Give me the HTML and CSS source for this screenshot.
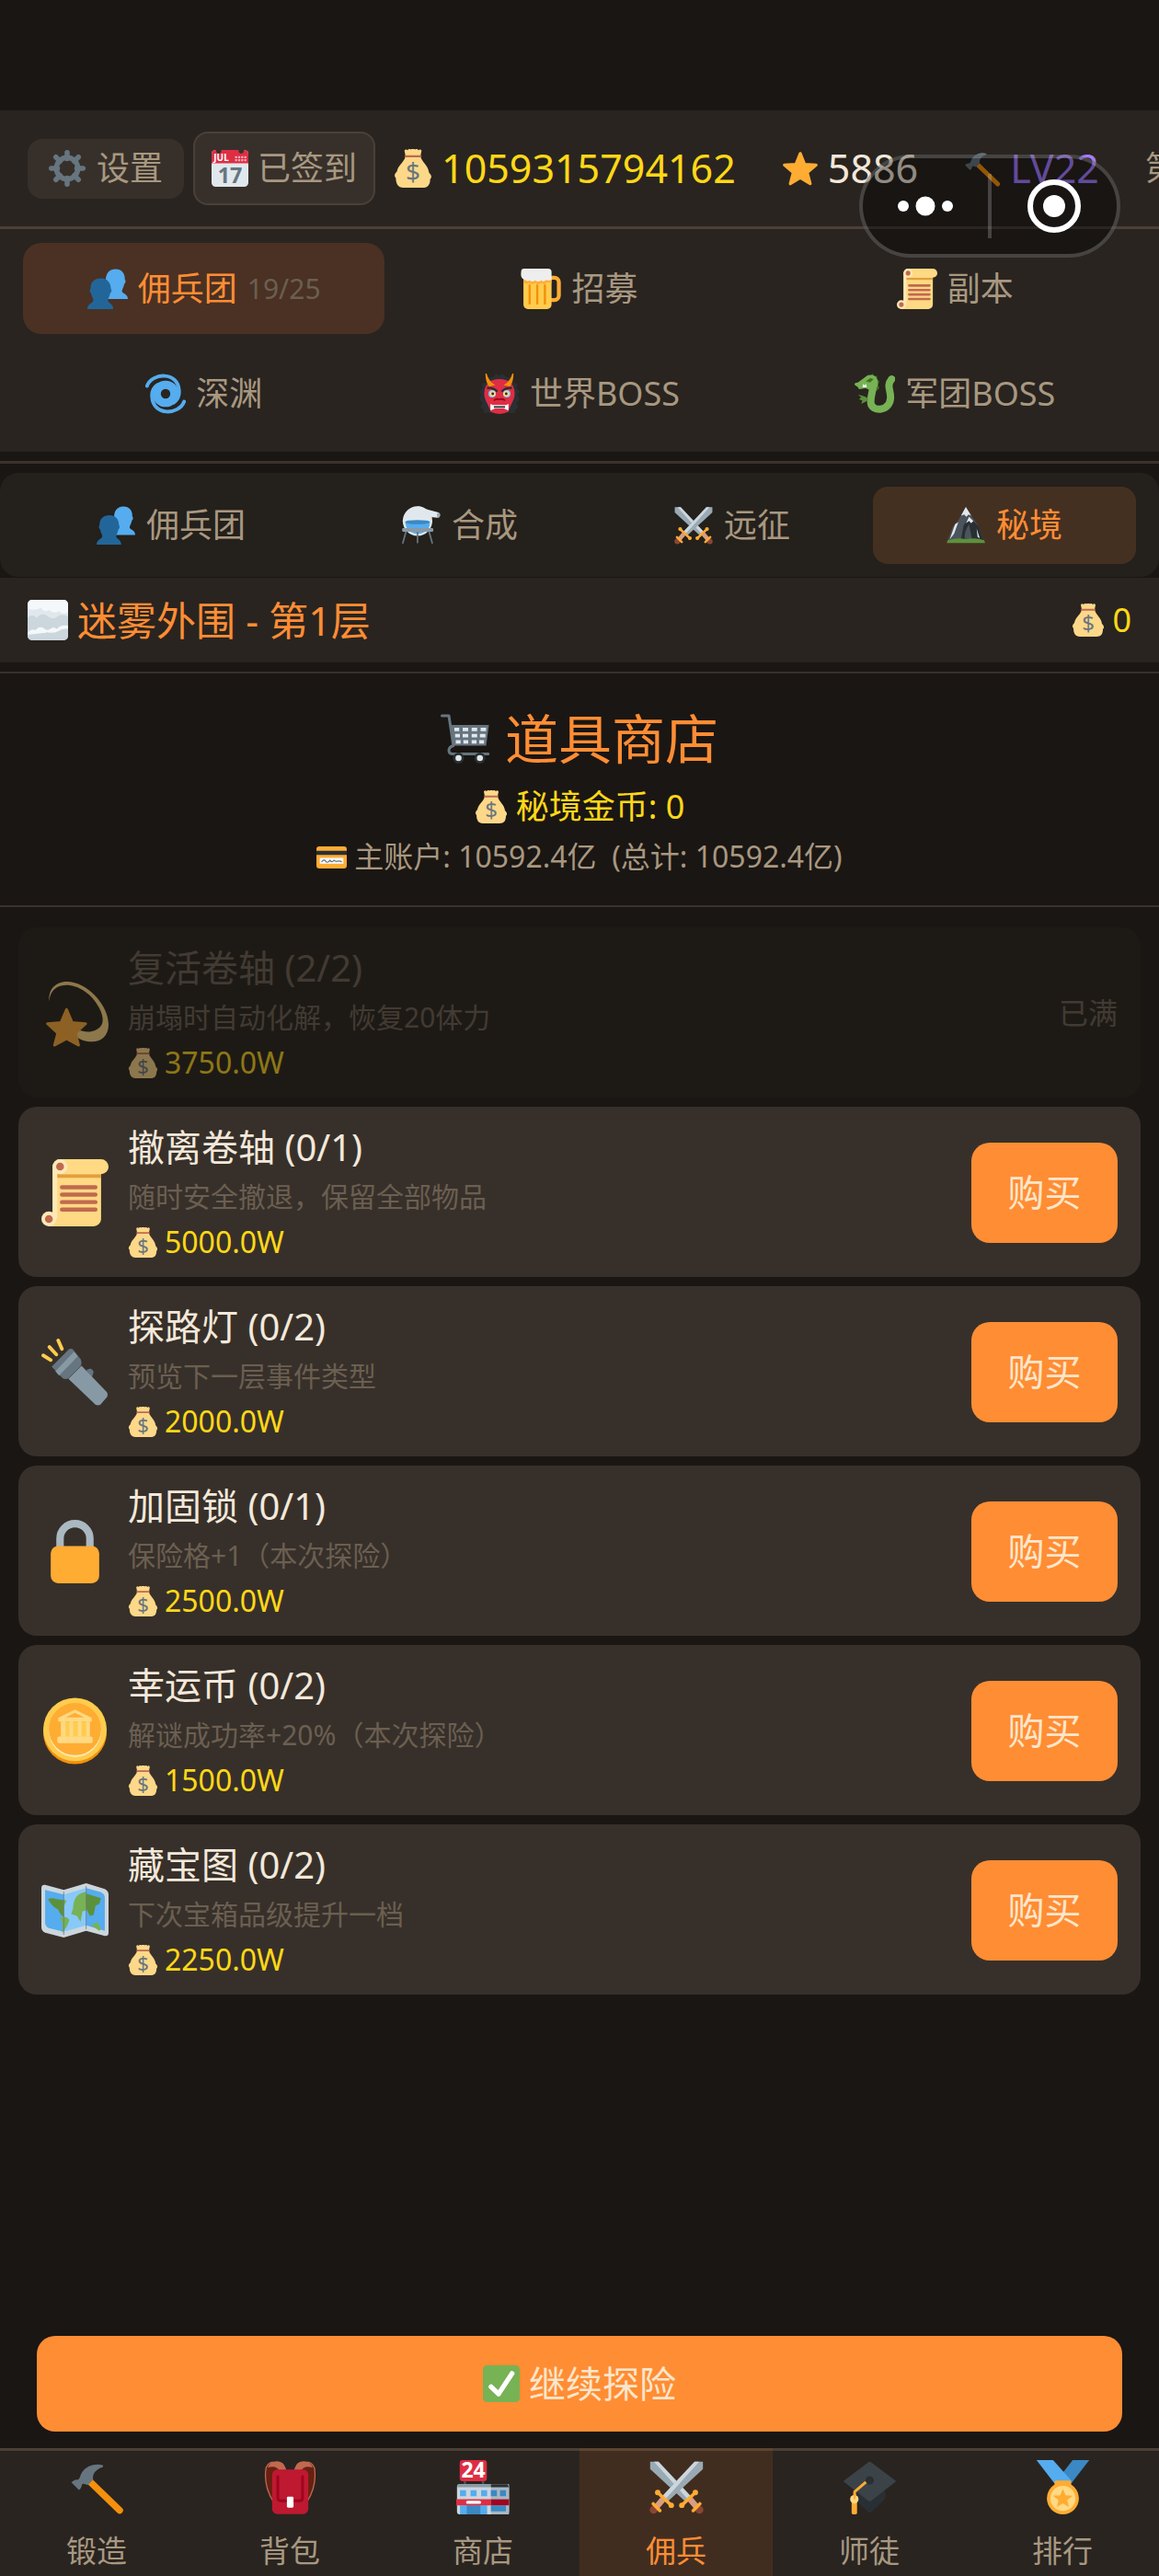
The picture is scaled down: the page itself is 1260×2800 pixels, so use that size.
FILE: index.html
```html
<!DOCTYPE html>
<html lang="zh-CN">
<head>
<meta charset="utf-8">
<meta name="viewport" content="width=device-width, initial-scale=1">
<title>道具商店</title>
<link rel="stylesheet" href="styles.css">
</head>
<body>
<svg class="sprite" aria-hidden="true">
  <symbol id="gear" viewBox="0 0 36 36">
    <g stroke="#66757F" stroke-width="5" stroke-linecap="round"><path d="M18 2.500v6M18 27.500v6M2.500 18h6M27.500 18h6M7 7l4 4M25 25l4 4M7 29l4-4M25 11l4-4"/></g>
    <circle cx="18" cy="18" r="10.500" fill="none" stroke="#66757F" stroke-width="5"/>
  </symbol>
  <symbol id="calendar" viewBox="0 0 36 36">
    <rect width="36" height="36" rx="4" fill="#E1E8ED"/>
    <path d="M0 13V4a4 4 0 0 1 4-4h28a4 4 0 0 1 4 4v9z" fill="#DD2E44"/>
    <circle cx="7" cy="1" r="2.500" fill="#37302a"/><circle cx="29" cy="1" r="2.500" fill="#37302a"/>
    <g fill="#F4ABBA"><path d="M23 6h2v2h-2zM26 6h2v2h-2zM29 6h2v2h-2zM32 6h2v2h-2zM23 9h2v2h-2zM26 9h2v2h-2zM29 9h2v2h-2zM32 9h2v2h-2z"/></g>
    <text x="9.500" y="11" class="cal-month" text-anchor="middle">JUL</text>
    <text x="18" y="32" class="cal-day" text-anchor="middle">17</text>
  </symbol>
  <symbol id="bag" viewBox="0 0 36 36">
    <path d="M11 7C9 13 4 15 3 21c-2 2-3 4-1 6 0 5 2 9 7 9h18c5 0 7-3 7-8 2-2 1-4-1-6-1-7-6-9-8-15z" fill="#FDD888"/>
    <path d="M11 6.500L10 1.500Q11-.5 13 1q1.500-2 3-.5 2-2 4 0 1.500-1.500 3 .5 2-1.500 3 .5l-1 5z" fill="#FDD888"/>
    <path d="M11 6.700h14" stroke="#BF6952" stroke-width="2" stroke-linecap="round"/>
    <text x="18" y="30" class="dollar" text-anchor="middle">$</text>
  </symbol>
  <symbol id="star" viewBox="0 0 36 36">
    <path d="M18 3.500l4.200 10.500 11.300.7-8.700 7.300 2.900 11L18 27l-9.700 6 2.900-11-8.700-7.300 11.300-.7z" fill="#FFAC33" stroke="#FFAC33" stroke-width="3" stroke-linejoin="round"/>
  </symbol>
  <symbol id="hammer" viewBox="0 0 36 36">
    <path d="M12.500 13.500L33 33.300" stroke="#F4900C" stroke-width="4.500" stroke-linecap="round"/>
    <path d="M22 3.500C17 1.800 11 4 8.500 7.500 6.500 10 7 12 5.500 13 4 13.200 3 12.800 1 14.800l5 5c2-1.300 1.500-2.800 2.200-3.800 1.300-1 2.800 1.200 4.100.2L15.500 13c-.7-2.500.3-6.500 6.500-8.400z" fill="#66757F"/>
  </symbol>
  <symbol id="busts" viewBox="0 0 36 36">
    <path d="M25 .5c5.500 0 8.500 4 8.300 9 1.200 1.500.7 3.500-.5 4.300-.4 3-1.800 4-2 6-.2 2.500 5.200 2.200 5.200 7.200H18V16l-1.500-3C15.500 5 19 .5 25 .5z" fill="#55ACEE"/>
    <path d="M12 8.500c5.500 0 9 4 8.800 9 1.200 1.500.7 3.500-.5 4.300-.4 3-1.800 4-2 6C18 31 23 30.500 23 36H0c0-5.500 5.500-5 5.300-8.200-.2-2-1.600-3-2-6-1.200-.8-1.700-2.800-.5-4.300-.2-5 3.200-9 9.200-9z" fill="#269"/>
  </symbol>
  <symbol id="beer" viewBox="0 0 36 36">
    <rect x="24" y="8" width="10" height="20" rx="4" fill="none" stroke="#FFAC33" stroke-width="3.500"/>
    <path d="M2.500 8h25v24a4 4 0 0 1-4 4h-17a4 4 0 0 1-4-4z" fill="#FFCC4D"/>
    <path d="M8 15v16M14.800 15v16M21.600 15v16" stroke="#F4900C" stroke-width="2" stroke-linecap="round"/>
    <path d="M2.500 10h25v3q-3-2-5 0-2 1.500-4-.5-3 3-5.500 0-3 2.500-5 0-3 2-5.500-.5z" fill="#FFAC33"/>
    <path d="M3 0h21.500a3 3 0 0 1 3 3v7q-3 1-5 0-2 2.500-4 .5-3 2-5.500 0-3 2-5 0-2 1.500-4-.5-4-1-3.700-5.500L.5 2.500Q.5 0 3 0z" fill="#EEE"/>
  </symbol>
  <symbol id="scroll" viewBox="0 0 36 36">
    <path d="M6 3h26v29a4 4 0 0 1-4 4H4v-7h2z" fill="#FFD983"/>
    <path d="M8 8h24v2H8z" fill="#E39F3D"/>
    <rect x="6" width="30" height="8" rx="4" fill="#FFD983"/>
    <path d="M6 4h2.500v28H6z" fill="#FFE8B6"/>
    <circle cx="10" cy="4" r="4" fill="#FFE8B6"/><circle cx="10" cy="4" r="2.100" fill="#C1694F"/>
    <circle cx="4" cy="32" r="4" fill="#FFE8B6"/><circle cx="4" cy="32" r="2.100" fill="#C1694F"/>
    <path d="M11 15h18M11 19h18M11 23h18M11 27h18" stroke="#C1694F" stroke-width="2.200" stroke-linecap="round"/>
  </symbol>
  <symbol id="cyclone" viewBox="0 0 36 36">
    <g fill="none" stroke="#55ACEE" stroke-linecap="round">
      <path d="M1.500 11C6-1 29-2 30 15c.5 5-2 9-5 11" stroke-width="3.200"/>
      <path d="M34.500 25C30 37 7 38 6 21c-.5-5 2-9 5-11" stroke-width="3.200"/>
      <circle cx="18" cy="18" r="8" stroke-width="7.500"/>
    </g>
  </symbol>
  <symbol id="ogre" viewBox="0 0 36 36">
    <path d="M12 3l3-3 3 2 3-2 3 3 5 1 1 4 4 1-1 4 3 3-2 3 2 4-3 3 2 4-3 2v3H4v-3l-3-2 2-4-3-3 2-4-2-3 3-3-1-4 4-1 1-4z" fill="#292F33"/>
    <path d="M18 5c8 0 13 4 13.500 12C32 24 27 28 26 34q-8 4-16 0C9 28 4 24 4.500 17 5 9 10 5 18 5z" fill="#DD2E44"/>
    <path d="M6 0q0 7 3 11l4-1Q8 7 6 0zM30 0q0 7-3 11l-4-1q5-3 7-10z" fill="#F4900C" stroke="#F4900C"/>
    <path d="M7 13q5-1 9 3M29 13q-5-1-9 3" stroke="#292F33" stroke-width="2" fill="none"/>
    <circle cx="11.500" cy="18" r="3.300" fill="#88C9F9"/><circle cx="24.500" cy="18" r="3.300" fill="#88C9F9"/>
    <circle cx="12" cy="18" r="2.500" fill="#FFD983"/><circle cx="24" cy="18" r="2.500" fill="#FFD983"/>
    <circle cx="12" cy="18" r="1.200" fill="#292F33"/><circle cx="24" cy="18" r="1.200" fill="#292F33"/>
    <path d="M13 24q2-2 5-1 3-1 5 1" fill="none" stroke="#A0041E" stroke-width="1.500"/>
    <path d="M10 27l2 1h12l2-1v6l-4-2h-8l-4 2z" fill="#FFF"/><path d="M13 29h10v1.500H13z" fill="#292F33"/>
  </symbol>
  <symbol id="dragon" viewBox="0 0 36 36">
    <path d="M11 4l1-3 2 1.500L16 0l1.500 2.500L20 2v3l2 2-1 3 1 3-3 3-8-8z" fill="#3E721D"/>
    <path d="M17 7c0 8-3 12-2.500 19 .5 8 16.500 8.500 17.500-4 .5-7-4-11 1-17" fill="none" stroke="#77B255" stroke-width="6.500" stroke-linecap="round"/>
    <path d="M0 10q0-2 3-2l8-6q5-2 8 1 3 4 1 9l-6 3-4-2-6 1-1-2z" fill="#77B255"/>
    <path d="M10 7l4-3 3 1-3 3z" fill="#3E721D"/><path d="M7 12l1-3 1 2 1-2 1 3z" fill="#FFF"/>
    <path d="M12 24l-6 3 1-3-3-1 2-2-3-2q4 0 9 3z" fill="#5C913B"/>
  </symbol>
  <symbol id="alembic" viewBox="0 0 36 36">
    <circle cx="14.500" cy="14" r="13.800" fill="#E1E8ED"/>
    <path d="M14 .2q4 0 8 2.500L34 6q2 1 1.500 3-.5 2-2.500 2L25 10z" fill="#E1E8ED"/><ellipse cx="34" cy="8.500" rx="1.500" ry="2.200" fill="#99AAB5"/>
    <path d="M3 15h23q0 10-11.500 11Q4 25 3 15z" fill="#55ACEE"/><ellipse cx="14.500" cy="15" rx="11.500" ry="2" fill="#3B88C3"/>
    <path d="M4 23L.8 34.500M25 23l3.200 11.500M14.500 24v10" stroke="#66757F" stroke-width="1.500" stroke-linecap="round"/>
    <rect x=".2" y="20.500" width="29" height="3.500" rx="1" fill="#8899A6"/>
  </symbol>
  <symbol id="swords" viewBox="0 0 36 36">
    <path d="M.5 1H6l22 23.500-3.500 3.500L.5 6z" fill="#99AAB5"/><path d="M3 1h3l21 22.500-2 2z" fill="#CCD6DD"/>
    <path d="M27 26l6 7" stroke="#D99E82" stroke-width="4"/><circle cx="33.200" cy="33" r="2.600" fill="#8A4633"/>
    <path d="M30.500 21.500l-9 8.500M29 33.500l4.500-4.500" stroke="#FFAC33" stroke-width="2.200" stroke-linecap="round"/>
    <circle cx="30.500" cy="21.500" r="1.800" fill="#FFAC33"/><circle cx="21.500" cy="30" r="1.800" fill="#FFAC33"/>
    <path d="M35.500 1H30L8 24.500l3.500 3.500 24-22z" fill="#99AAB5"/><path d="M33 1h-3L9 23.500l2 2z" fill="#CCD6DD"/>
    <path d="M9 26l-6 7" stroke="#D99E82" stroke-width="4"/><circle cx="2.800" cy="33" r="2.600" fill="#8A4633"/>
    <path d="M5.500 21.500l9 8.500M7 33.500L2.500 29" stroke="#FFAC33" stroke-width="2.200" stroke-linecap="round"/>
    <circle cx="5.500" cy="21.500" r="1.800" fill="#FFAC33"/><circle cx="14.500" cy="30" r="1.800" fill="#FFAC33"/>
  </symbol>
  <symbol id="mountain" viewBox="0 0 36 36">
    <path d="M.5 34L6 19l4-4L18 1l7 11 5 7 5.500 15z" fill="#4B545D"/>
    <path d="M13 33l3-15 5-8 9 9 5 14z" fill="#292F33"/><path d="M17 33q-1-9 4-16l3 16z" fill="#4B545D"/>
    <path d="M18 .8L13.500 9l3-1 2 2 2-2 2.500 1zM21 10l-3 6 3-2 2 2 2-2zM8 17l3-2-4 11-4 5zM28 21l3 9-2-1z" fill="#E1E8ED"/>
    <path d="M1 32q10-3 17-1 10-2 17 1l1 2.500H.3z" fill="#5C913B"/>
  </symbol>
  <symbol id="fog" viewBox="0 0 36 36">
    <rect width="36" height="36" rx="4" fill="#E1E8ED"/>
    <path d="M0 8V4a4 4 0 0 1 4-4h28a4 4 0 0 1 4 4v7q-5 3-8-1-5 3-9-1-4 3-7-2-5 3-12 1z" fill="#F5F8FA"/>
    <path d="M0 16q4-4 8 0 4-5 9-2 4 4 8 2 5-5 11-1v14q-5-2-9 1-8 4-14 0-7-2-13 1z" fill="#CCD6DD"/>
    <path d="M0 29q4-4 7-2 3-4 7-2 3 3 6 1 3-3 6 0 3-4 10-3v3q-6 0-9 3-5 2-9 0-9 2-18 3z" fill="#F5F8FA"/>
    <path d="M0 31q9-1 18-2 5 1 9-1 4-3 9-2v6a4 4 0 0 1-4 4H4a4 4 0 0 1-4-4z" fill="#CCD6DD"/>
  </symbol>
  <symbol id="cart" viewBox="0 0 36 36">
    <path d="M1 1.300h5L9.300 23Q6 24 6 26.500 6 29 9 29h25.500" fill="none" stroke="#66757F" stroke-width="2" stroke-linecap="round" stroke-linejoin="round"/>
    <path d="M7.500 8H35l-2 15H9z" fill="#66757F"/>
    <path d="M10 10h3.500v2.500H10zM16 10h4v2.500h-4zM22.500 10h4v2.500h-4zM29 10h4v2.500h-4zM10.500 14.500H14V17h-3.500zM16 14.500h4V17h-4zM22.500 14.500h4V17h-4zM28.500 14.500h4V17h-4zM11 19h3.500v2.500H11zM16.500 19H20v2.500h-3.500zM22.500 19H26v2.500h-3.500zM28 19h3.500v2.500H28z" fill="#E1E8ED"/>
    <circle cx="13" cy="32" r="4" fill="#292F33"/><circle cx="28.500" cy="32" r="4" fill="#292F33"/><circle cx="13" cy="32" r="2.200" fill="#E1E8ED"/><circle cx="28.500" cy="32" r="2.200" fill="#E1E8ED"/>
  </symbol>
  <symbol id="card" viewBox="0 0 36 36">
    <rect y="5.500" width="36" height="26" rx="3.500" fill="#FFAC33"/><path d="M0 10.500h36v5H0z" fill="#292F33"/>
    <path d="M4 19h28v7H4z" fill="#F5F8FA"/><path d="M6 24q3-4 5-1t5-1q2 3 5 0 2 2 4 1 3-1 5 1" fill="none" stroke="#66757F" stroke-width="1.300"/>
  </symbol>
  <symbol id="dizzy" viewBox="0 0 36 36">
    <path d="M4.200 11.500C3.500 4 9 1 13.500 1 25 1 36 14 36 24c0 6-4 9.200-9 9.200-3 0-6-.7-9-3.200v-4c4 2 8 2.500 11 1 4.500-2 5-6 2-12C27 7 19 2.500 13 2.800 8 3 4.500 6 4.200 11.500z" fill="#FFD983"/>
    <path d="M13.500 16l3 7 7.200.5-5.500 5 1.700 6.500-6.400-3.500L7.100 35l1.700-6.500-5.500-5 7.200-.5z" fill="#FFAC33" stroke="#FFAC33" stroke-width="1.500" stroke-linejoin="round"/>
  </symbol>
  <symbol id="flashlight" viewBox="0 0 36 36">
    <path d="M1 9l4 2.500M4.300 4.500L8 8.500M9 1l2 4.500" stroke="#FFCC4D" stroke-width="1.900" stroke-linecap="round"/>
    <path d="M24 17q3-2 4 1l-1 3z" fill="#66757F"/>
    <path d="M14.500 21.600l7-7 13.500 14q1 1.500 0 3l-3.200 3.600q-1.500 1-3 0z" fill="#8899A6"/>
    <path d="M5.500 15l9.300-9.300q1-.5 2 0L21 11q1 2 0 3.800l-6.500 6.500q-1.500.8-3 0z" fill="#66757F"/><path d="M7.500 17.500L17.500 7l2 2.500L9.500 19.800z" fill="#8899A6"/>
  </symbol>
  <symbol id="lock" viewBox="0 0 36 36">
    <path d="M10 18v-7a8 8 0 0 1 16 0v7" fill="none" stroke="#AAB8C2" stroke-width="4"/><rect x="5" y="15" width="26" height="20" rx="4" fill="#FFAC33"/>
  </symbol>
  <symbol id="coin" viewBox="0 0 36 36">
    <circle cx="18" cy="18.800" r="17" fill="#F4900C"/><circle cx="18" cy="17.200" r="17" fill="#FFCC4D"/><circle cx="18" cy="18" r="14" fill="#FFE8B6"/><circle cx="18" cy="17" r="14" fill="#FFAC33"/>
    <path d="M18 6.500l9 4.500v2H9v-2z" fill="#FFD983"/><path d="M10.500 13h15v9h-15z" fill="#FFCC4D"/><path d="M10.500 13H13v8h-2.500zM15 13h2v8h-2zM19.500 13h2v8h-2zM24 13h2v8h-2z" fill="#FFD983"/><rect x="8.500" y="21" width="19" height="3.500" rx="1" fill="#FFD983"/>
    <path d="M13 10.700l5-2.500 5 2.500z" fill="#FFAC33"/>
  </symbol>
  <symbol id="map" viewBox="0 0 36 36">
    <path d="M0 6q0-2 2-1.700L12 7l12-3.500 10 3q2 1 2 3V30q0 2-2 1.700L24 29 12 32.500 2 30q-2-1-2-3z" fill="#CCD6DD"/>
    <path d="M2 7l10 2.500v20L4 27.500q-2-1-2-3zM24 6l8 2.300q2 1 2 3V29l-10-3z" fill="#55ACEE"/><path d="M12 9.500L24 6v20l-12 3.500z" fill="#88C9F9"/>
    <path d="M3.500 12q2-1 4.500 0l4 .5v9q-2-1-3-4-3-1-5.500-5.500zM24 9l8 2.500-1 3-2 1-1 5-2 .5-2-4z" fill="#5C913B"/>
    <path d="M12 12l1.500 1-1.500 3zM10 22q3-1.500 5 1-1 4-4 7 1-4-1-8zM17 17q0-8 7-9v10l-2 .5-1 5.500-2-3-3-1zM27 26l3-2 2 4-1 1zM28 21l3 2" fill="#77B255"/>
    <path d="M12 8v23M24 5v23" stroke="#66757F" stroke-width=".4"/>
  </symbol>
  <symbol id="check" viewBox="0 0 36 36"><rect width="36" height="36" rx="4" fill="#77B255"/><path d="M8 21l7.300 7L28.500 8" fill="none" stroke="#FFF" stroke-width="4.800" stroke-linecap="round" stroke-linejoin="round"/></symbol>
  <symbol id="backpack" viewBox="0 0 36 36">
    <path d="M7 28Q0 17 2 5q3-6 9-2l3 5M29 28q7-11 5-23-3-6-9-2l-3 5" fill="#662113" stroke="#C1694F" stroke-width=".8"/>
    <path d="M3 5q2-5 8-4 4 1 4.500 7h-4Q9 3 3 5zM33 5q-2-5-8-4-4 1-4.500 7h4Q27 3 33 5z" fill="#C1694F"/>
    <rect x="6" y="6.300" width="24" height="29.500" rx="3.500" fill="#BE1931"/><path d="M9.800 11v14q0 2 2 2h12.400q2 0 2-2V11" fill="none" stroke="#A0041E" stroke-width="1.800" stroke-linecap="round"/>
    <rect x="15.800" y="24.200" width="4.400" height="7.300" rx=".8" fill="#FFF"/>
  </symbol>
  <symbol id="store" viewBox="0 0 36 36">
    <path d="M5 13h1.500v4H5zM17 13h1.500v4H17z" fill="#4B545D"/><rect x="2.300" y="0" width="18" height="14" rx="2" fill="#DD2E44"/><text x="11.300" y="11.800" class="store-sign" text-anchor="middle">24</text>
    <rect x=".5" y="16" width="34.500" height="20" rx="1.500" fill="#CCD6DD"/><path d="M23 16h12v20H23z" fill="#AAB8C2"/>
    <path d="M.5 18l1-2H23v2z" fill="#8899A6"/><path d="M23 16h11l1 2H23z" fill="#292F33"/>
    <path d="M2.500 20h4v4h-4zM9.500 20h4v4h-4zM16.500 20h4v4h-4zM2.500 30h18v6h-18z" fill="#55ACEE"/><path d="M23 20h4v4h-4zM29 20h4v4h-4zM23 30h10v4H23zM7 30h9v6H7z" fill="#3B88C3"/>
    <path d="M0 26h23v4H0z" fill="#DD2E44"/><path d="M23 26h12v4H23z" fill="#A0041E"/><rect x="6.500" y="27" width="10" height="2" rx="1" fill="#FFF"/>
  </symbol>
  <symbol id="cap" viewBox="0 0 36 36">
    <path d="M8 21l10-6 10 5q1.500 5-1 7l-8 7.500q-1 .7-2 0L9 27z" fill="#292F33"/><path d="M17 1.500q1-1 2 0L35 13.500q.7.500 0 1L19 27q-1 .7-2 0L1 14.500q-.7-.5 0-1z" fill="#3B4348"/>
    <circle cx="18" cy="13.500" r="2.800" fill="#292F33"/><path d="M15.500 14.500L8 21v5" fill="none" stroke="#FFAC33" stroke-width="1.800"/><rect x="6" y="26" width="3.600" height="10" rx="1" fill="#FFAC33"/><circle cx="7.800" cy="26" r="2.800" fill="#FFD983"/><path d="M8 22v4" stroke="#FFAC33" stroke-width="1.500"/>
  </symbol>
  <symbol id="medal" viewBox="0 0 36 36">
    <path d="M24.500 0h11L23.500 15.500l-6-6.500z" fill="#3B88C3"/><path d="M.5 0h11L24 14l-11.500 1.500z" fill="#55ACEE"/>
    <rect x="12.500" y="13.500" width="11" height="5" rx="1" fill="#FFAC33"/><circle cx="18" cy="25.400" r="10.600" fill="#FFAC33"/><circle cx="18" cy="25.400" r="8.300" fill="#FFD983"/>
    <path d="M18 19l1.800 4.300 4.700.3-3.600 3 1.100 4.500-4-2.400-4 2.400 1.100-4.500-3.600-3 4.700-.3z" fill="#FFAC33"/>
  </symbol>
</svg>

<div class="app">
  <header class="topbar">
    <button class="pill" type="button"><svg class="icon i40"><use href="#gear"/></svg>设置</button>
    <button class="pill pill-outlined" type="button"><svg class="icon i40"><use href="#calendar"/></svg>已签到</button>
    <div class="stats">
      <span class="stat gold"><svg class="icon i42"><use href="#bag"/></svg>1059315794162</span>
      <span class="stat"><svg class="icon i40"><use href="#star"/></svg>5886</span>
      <span class="stat level"><svg class="icon i40"><use href="#hammer"/></svg>LV22</span>
      <span class="stat rank">第</span>
    </div>
    <div class="capsule">
      <button class="capsule-btn" type="button" aria-label="更多"><svg class="dots" viewBox="0 0 60 24"><circle cx="6" cy="12" r="6"/><circle cx="30" cy="12" r="10.500"/><circle cx="54" cy="12" r="6"/></svg></button>
      <span class="capsule-line"></span>
      <button class="capsule-btn" type="button" aria-label="关闭"><svg class="target" viewBox="0 0 58 58"><circle cx="29" cy="29" r="26" fill="none" stroke="#fff" stroke-width="6"/><circle cx="29" cy="29" r="12"/></svg></button>
    </div>
  </header>

  <nav class="tabs">
    <button class="tab active" type="button"><svg class="icon i44"><use href="#busts"/></svg>佣兵团<small>19/25</small></button>
    <button class="tab" type="button"><svg class="icon i44"><use href="#beer"/></svg>招募</button>
    <button class="tab" type="button"><svg class="icon i44"><use href="#scroll"/></svg>副本</button>
    <button class="tab" type="button"><svg class="icon i44"><use href="#cyclone"/></svg>深渊</button>
    <button class="tab" type="button"><svg class="icon i44"><use href="#ogre"/></svg>世界BOSS</button>
    <button class="tab" type="button"><svg class="icon i44"><use href="#dragon"/></svg>军团BOSS</button>
  </nav>
  <hr class="rule">

  <nav class="subtabs">
    <button class="subtab" type="button"><svg class="icon i42"><use href="#busts"/></svg>佣兵团</button>
    <button class="subtab" type="button"><svg class="icon i42"><use href="#alembic"/></svg>合成</button>
    <button class="subtab" type="button"><svg class="icon i42"><use href="#swords"/></svg>远征</button>
    <button class="subtab active" type="button"><svg class="icon i42"><use href="#mountain"/></svg>秘境</button>
  </nav>

  <section class="floor">
    <h2 class="floor-name"><svg class="icon i44"><use href="#fog"/></svg>迷雾外围 - 第1层</h2>
    <span class="floor-coins"><svg class="icon i36"><use href="#bag"/></svg>0</span>
  </section>
  <hr class="rule thin">

  <main class="shop">
    <div class="shop-head">
      <h1 class="shop-title"><svg class="icon i54"><use href="#cart"/></svg>道具商店</h1>
      <p class="shop-coins"><svg class="icon i36"><use href="#bag"/></svg>秘境金币: 0</p>
      <p class="shop-account"><svg class="icon i33"><use href="#card"/></svg>主账户: 10592.4亿&nbsp; (总计: 10592.4亿)</p>
    </div>
    <ul class="items">
      <li class="item full"><svg class="icon i73"><use href="#dizzy"/></svg><div class="info"><h3>复活卷轴 (2/2)</h3><p>崩塌时自动化解，恢复20体力</p><span class="price"><svg class="icon i33"><use href="#bag"/></svg>3750.0W</span></div><span class="state">已满</span></li>
      <li class="item"><svg class="icon i73"><use href="#scroll"/></svg><div class="info"><h3>撤离卷轴 (0/1)</h3><p>随时安全撤退，保留全部物品</p><span class="price"><svg class="icon i33"><use href="#bag"/></svg>5000.0W</span></div><button class="buy" type="button">购买</button></li>
      <li class="item"><svg class="icon i73"><use href="#flashlight"/></svg><div class="info"><h3>探路灯 (0/2)</h3><p>预览下一层事件类型</p><span class="price"><svg class="icon i33"><use href="#bag"/></svg>2000.0W</span></div><button class="buy" type="button">购买</button></li>
      <li class="item"><svg class="icon i73"><use href="#lock"/></svg><div class="info"><h3>加固锁 (0/1)</h3><p>保险格+1（本次探险）</p><span class="price"><svg class="icon i33"><use href="#bag"/></svg>2500.0W</span></div><button class="buy" type="button">购买</button></li>
      <li class="item"><svg class="icon i73"><use href="#coin"/></svg><div class="info"><h3>幸运币 (0/2)</h3><p>解谜成功率+20%（本次探险）</p><span class="price"><svg class="icon i33"><use href="#bag"/></svg>1500.0W</span></div><button class="buy" type="button">购买</button></li>
      <li class="item"><svg class="icon i73"><use href="#map"/></svg><div class="info"><h3>藏宝图 (0/2)</h3><p>下次宝箱品级提升一档</p><span class="price"><svg class="icon i33"><use href="#bag"/></svg>2250.0W</span></div><button class="buy" type="button">购买</button></li>
    </ul>
    <button class="continue" type="button"><svg class="icon i40"><use href="#check"/></svg>继续探险</button>
  </main>

  <nav class="bottom">
    <a href="#forge"><svg class="icon i59"><use href="#hammer"/></svg>锻造</a>
    <a href="#pack"><svg class="icon i59"><use href="#backpack"/></svg>背包</a>
    <a href="#shop"><svg class="icon i59"><use href="#store"/></svg>商店</a>
    <a href="#merc" class="active"><svg class="icon i59"><use href="#swords"/></svg>佣兵</a>
    <a href="#mentor"><svg class="icon i59"><use href="#cap"/></svg>师徒</a>
    <a href="#rank"><svg class="icon i59"><use href="#medal"/></svg>排行</a>
  </nav>
</div>
</body>
</html>
```

FILE: styles.css
```css
:root {
  --bg: #1a1613;
  --panel: #292420;
  --card: #37302a;
  --line: #4a4038;
  --muted: #a89880;
  --dim: #6b5f51;
  --cream: #f3e8da;
  --orange: #ff8d34;
  --gold: #ffd817;
}

* { box-sizing: border-box; margin: 0; padding: 0; }

body {
  background: var(--bg);
  color: var(--muted);
  font-family: "Noto Sans", "Noto Sans CJK SC", sans-serif;
  font-size: 36px;
  line-height: 1;
}

button {
  border: 0;
  background: none;
  color: inherit;
  font: inherit;
  cursor: pointer;
}

h1, h2, h3 { font-weight: 400; }

.sprite { display: none; }
.icon { flex: none; display: block; }
.i33 { width: 33px; height: 33px; }
.i36 { width: 36px; height: 36px; }
.i40 { width: 40px; height: 40px; }
.i42 { width: 42px; height: 42px; }
.i44 { width: 44px; height: 44px; }
.i54 { width: 54px; height: 54px; }
.i59 { width: 59px; height: 59px; }
.i73 { width: 73px; height: 73px; }

.cal-month { font-size: 9px; font-weight: 700; fill: #fff; }
.cal-day { font-size: 21px; font-weight: 700; fill: #66757f; }
.dollar { font-size: 24px; fill: #67757f; }
.store-sign { font-size: 14px; font-weight: 700; fill: #fff; }

.app {
  display: flex;
  flex-direction: column;
  min-height: 100vh;
  padding-top: 120px;
}

/* Top bar */
.topbar {
  position: relative;
  display: flex;
  align-items: center;
  gap: 10px;
  height: 129px;
  padding: 0 0 0 30px;
  background: var(--panel);
  border-bottom: 3px solid var(--line);
}
.pill {
  flex: none;
  display: flex;
  align-items: center;
  gap: 12px;
  padding: 0 23px;
  height: 65px;
  border-radius: 16px;
  background: var(--card);
  white-space: nowrap;
}
.pill-outlined {
  height: 80px;
  padding: 0 18px;
  gap: 10px;
  border: 2px solid var(--line);
}
.stats {
  flex: 1;
  min-width: 0;
  display: flex;
  gap: 50px;
  padding-left: 10px;
  overflow: hidden;
  color: var(--cream);
  font-size: 43px;
  line-height: 60px;
}
.stat {
  flex: none;
  display: flex;
  align-items: center;
  gap: 10px;
  white-space: nowrap;
}
.gold { color: var(--gold); }
.level { color: #a67cff; }
.rank { color: var(--muted); font-size: 36px; }

.capsule {
  position: absolute;
  top: 48px;
  right: 42px;
  z-index: 1;
  display: flex;
  align-items: center;
  width: 284px;
  height: 112px;
  border: 4px solid rgba(255, 255, 255, 0.2);
  border-radius: 56px;
  background: rgba(0, 0, 0, 0.4);
}
.capsule-btn {
  flex: 1;
  display: flex;
  align-items: center;
  justify-content: center;
  height: 100%;
}
.capsule-btn svg { fill: #fff; }
.capsule-line { width: 4px; height: 70px; background: rgba(255, 255, 255, 0.2); }
.dots { width: 60px; height: 24px; }
.target { width: 58px; height: 58px; }

/* Main tabs */
.tabs {
  display: grid;
  grid-template-columns: repeat(3, 1fr);
  gap: 15px;
  padding: 15px 25px 14px;
  background: var(--panel);
}
.tab {
  display: flex;
  align-items: center;
  justify-content: center;
  gap: 11px;
  height: 99px;
  border-radius: 20px;
}
.tab small { color: var(--dim); font-size: 30px; }
.tab.active, .subtab.active { color: var(--orange); background: #4a3123; }

.rule {
  height: 3px;
  margin: 10px 0;
  border: 0;
  background: #3b322b;
}
.rule.thin { height: 2px; background: #37302c; }

.subtabs {
  display: flex;
  gap: 10px;
  margin-bottom: 1px;
  padding: 15px 25px 14px;
  border-radius: 20px;
  background: #24201b;
}
.subtab {
  flex: 1 1 auto;
  display: flex;
  align-items: center;
  justify-content: center;
  gap: 12px;
  height: 84px;
  border-radius: 16px;
}
.subtab.active { background: #443021; }

.floor {
  display: flex;
  align-items: center;
  justify-content: space-between;
  height: 92px;
  padding: 0 30px;
  background: var(--panel);
}
.floor-name, .floor-coins { display: flex; align-items: center; }
.floor-name { gap: 10px; color: var(--orange); font-size: 43px; }
.floor-coins { gap: 8px; color: var(--gold); }

/* Shop */
.shop {
  flex: 1;
  display: flex;
  flex-direction: column;
}
.shop-head {
  display: flex;
  flex-direction: column;
  align-items: center;
  padding: 16px 30px 28px;
  border-bottom: 2px solid #3b322b;
}
.shop-title, .shop-coins, .shop-account {
  display: flex;
  align-items: center;
  justify-content: center;
}
.shop-title { gap: 16px; height: 90px; color: var(--orange); font-size: 58px; }
.shop-coins { gap: 9px; height: 58px; color: var(--gold); }
.shop-account { gap: 8px; height: 50px; font-size: 32px; }

.items {
  display: flex;
  flex-direction: column;
  gap: 10px;
  padding: 22px 20px 0;
  list-style: none;
}
.item {
  display: flex;
  align-items: center;
  gap: 21px;
  padding: 17px 25px 16px;
  border-radius: 20px;
  background: var(--card);
}
.info { flex: 1; }
.info h3 { color: var(--cream); font-size: 40px; line-height: 54px; }
.info p { color: var(--dim); font-size: 30px; line-height: 54px; }
.price {
  display: flex;
  align-items: center;
  gap: 7px;
  height: 44px;
  color: var(--gold);
  font-size: 32px;
}
.buy {
  width: 159px;
  height: 109px;
  border-radius: 20px;
  background: var(--orange);
  color: #fce6cb;
  font-size: 40px;
}
.item.full { background: #201e19; opacity: 0.5; }
.item.full h3, .state { color: var(--dim); }
.state { font-size: 32px; }

.continue {
  display: flex;
  align-items: center;
  justify-content: center;
  gap: 10px;
  height: 104px;
  margin: auto 40px 18px;
  border-radius: 20px;
  background: var(--orange);
  color: #fce6cb;
  font-size: 40px;
}

/* Bottom navigation */
.bottom {
  display: grid;
  grid-template-columns: repeat(6, 1fr);
  height: 139px;
  background: var(--panel);
}
.bottom a {
  display: flex;
  flex-direction: column;
  align-items: center;
  gap: 23px;
  padding-top: 10px;
  border-top: 3px solid var(--line);
  color: var(--muted);
  font-size: 33px;
  text-decoration: none;
}
.bottom a.active {
  border-color: #5c4533;
  background: #412d20;
  color: var(--orange);
}
```
